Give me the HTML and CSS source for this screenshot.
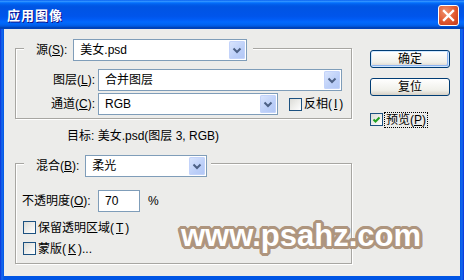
FILE: index.html
```html
<!DOCTYPE html>
<html lang="zh-CN">
<head>
    <meta charset="UTF-8">
    <title>应用图像</title>
    <link rel="stylesheet" href="styles.css">
</head>
<body>
    <div class="window">
        <div class="titlebar">
            <span class="title">应用图像</span>
            <span class="close">
                <svg width="21" height="21" viewBox="0 0 21 21"><path d="M6 6 L15 15 M15 6 L6 15" stroke="#fff" stroke-width="2.4" stroke-linecap="square"/></svg>
            </span>
        </div>
        <div class="client">
            <div class="main">
                <div class="group">
                    <div class="group-head">
                        <span>源(<u>S</u>):</span>
                        <div class="combo combo-source">
                            <span class="value">美女.psd</span>
                            <i class="arrow"><svg width="16" height="18" viewBox="0 0 16 18"><polyline points="4.5,7.5 8,11 11.5,7.5" fill="none" stroke="#4d6185" stroke-width="2"/></svg></i>
                        </div>
                    </div>
                    <div class="rows">
                        <span class="row-label">图层(<u>L</u>):</span>
                        <div class="combo combo-layer">
                            <span class="value">合并图层</span>
                            <i class="arrow"><svg width="16" height="18" viewBox="0 0 16 18"><polyline points="4.5,7.5 8,11 11.5,7.5" fill="none" stroke="#4d6185" stroke-width="2"/></svg></i>
                        </div>
                        <span class="row-label">通道(<u>C</u>):</span>
                        <div class="channel-line">
                            <div class="combo combo-channel">
                                <span class="value">RGB</span>
                                <i class="arrow"><svg width="16" height="18" viewBox="0 0 16 18"><polyline points="4.5,7.5 8,11 11.5,7.5" fill="none" stroke="#4d6185" stroke-width="2"/></svg></i>
                            </div>
                            <label class="check invert"><span class="box"></span>反相(<u>I</u>)</label>
                        </div>
                    </div>
                </div>

                <p class="target">目标: 美女.psd(图层 3, RGB)</p>

                <div class="group group-blend">
                    <div class="group-head">
                        <span>混合(<u>B</u>):</span>
                        <div class="combo combo-blend">
                            <span class="value">柔光</span>
                            <i class="arrow"><svg width="16" height="18" viewBox="0 0 16 18"><polyline points="4.5,7.5 8,11 11.5,7.5" fill="none" stroke="#4d6185" stroke-width="2"/></svg></i>
                        </div>
                    </div>
                    <div class="opacity">
                        <span class="opacity-label">不透明度(<u>O</u>):</span>
                        <div class="textbox">70</div>
                        <span class="unit">%</span>
                    </div>
                    <div class="checks">
                        <label class="check"><span class="box"></span>保留透明区域(<u>T</u>)</label>
                        <label class="check"><span class="box"></span>蒙版(<u>K</u>)...</label>
                    </div>
                </div>
            </div>

            <div class="side">
                <button class="btn btn-default">确定</button>
                <button class="btn">复位</button>
                <label class="check preview">
                    <span class="box"><svg width="11" height="11" viewBox="0 0 11 11"><path d="M2.5 5.5 L4.5 7.5 L8.5 3.5" fill="none" stroke="#21a121" stroke-width="2"/></svg></span>
                    <span class="focus">预览(<u>P</u>)</span>
                </label>
            </div>

            <div class="watermark">www.psahz.com</div>
        </div>
    </div>
</body>
</html>
```

FILE: styles.css
```css
body{
    margin: 0;
    font-family: "Liberation Sans", "Noto Sans CJK SC", sans-serif;
    font-size: 12px;
    line-height: 14px;
    color: #000;
}
.window{
    width: 464px;
    height: 280px;
    display: flex;
    flex-direction: column;
    background: linear-gradient(to right, #0831d9, #166aee 2px, #0055e5 4px, #0055e5 460px, #166aee 462px, #0831d9);
}
/* __________ title bar __________ */
.titlebar{
    height: 29px;
    display: flex;
    align-items: center;
    justify-content: space-between;
    padding: 0 5px 0 7px;
    background: linear-gradient(to bottom, #0058ee 0%, #3593ff 4%, #288eff 6%, #127dff 8%, #036ffc 10%, #0262ee 14%, #0057e5 20%, #0054e3 24%, #0055eb 56%, #005bf5 66%, #026afe 76%, #0062ef 86%, #0052d6 92%, #0040ab 96%, #0045c8 100%);
}
.title{
    color: #fff;
    font-weight: bold;
    font-size: 13px;
    letter-spacing: 1px;
    text-shadow: 1px 1px #0f1089;
    padding-top: 2px;
}
.close{
    width: 21px;
    height: 21px;
    margin-top: 2px;
    box-sizing: border-box;
    border: 1px solid #fff;
    border-radius: 3px;
    background: radial-gradient(circle at 35% 30%, #f0926e, #e0582f 55%, #c4381b);
    display: flex;
    align-items: center;
    justify-content: center;
}
.close svg{
    margin: -1px;
}
/* __________ client area __________ */
.client{
    flex: 1;
    margin: 0 4px 4px;
    padding-left: 11px;
    display: flex;
    gap: 18px;
    position: relative;
    background-color: #ececea;
}
.main{
    width: 337px;
    padding-top: 19px;
}
.group{
    border: 1px solid #a7a6a2;
    box-shadow: inset 1px 1px #fff, 1px 1px #fff;
    padding-bottom: 3px;
}
.group-head{
    display: flex;
    align-items: center;
    gap: 6px;
    width: fit-content;
    height: 22px;
    margin: -10px 0 0 8px;
    padding: 0 6px 0 12px;
    background-color: #ececea;
}
.group-blend{
    margin-top: 20px;
    padding-bottom: 8px;
}
.group-blend .group-head{
    margin-top: -9px;
    padding-right: 4px;
}
.combo{
    height: 22px;
    box-sizing: border-box;
    border: 1px solid #7f9db9;
    background-color: #fff;
    display: flex;
    align-items: center;
}
.combo .value{
    padding-left: 6px;
    flex: 1;
}
.combo .arrow{
    width: 16px;
    height: 18px;
    margin-right: 1px;
    border-radius: 2px;
    background: linear-gradient(135deg, #dbe6fd, #bccff8 60%, #b1c6f5);
    box-shadow: inset 0 0 0 1px #c3d3fa;
}
.combo .arrow svg{
    display: block;
}
.combo-source{ width: 174px; }
.combo-layer{ width: 244px; }
.combo-channel{ width: 180px; }
.combo-blend{ width: 122px; }

.rows{
    display: grid;
    grid-template-columns: 79px auto;
    column-gap: 3px;
    row-gap: 2px;
    align-items: center;
    margin-top: 8px;
}
.row-label{
    text-align: right;
}
.channel-line{
    display: flex;
    align-items: center;
}
.invert{
    margin-left: 11px;
}
.target{
    margin: 10px 0 0;
    padding-left: 52px;
}
.opacity{
    display: flex;
    align-items: center;
    margin-top: 13px;
    padding-left: 6px;
}
.opacity-label{
    width: 73px;
    margin-right: 3px;
    white-space: nowrap;
}
.textbox{
    width: 42px;
    height: 22px;
    box-sizing: border-box;
    border: 1px solid #7f9db9;
    background-color: #fff;
    padding: 3px 0 0 6px;
}
.unit{
    margin-left: 8px;
}
.checks{
    display: flex;
    flex-direction: column;
    gap: 8px;
    margin-top: 9px;
    padding-left: 7px;
}
.check{
    display: flex;
    align-items: center;
    height: 13px;
    gap: 2px;
}
.box{
    width: 13px;
    height: 13px;
    box-sizing: border-box;
    border: 1px solid #1c5180;
    background: linear-gradient(135deg, #dcdcd7, #fff);
    display: flex;
    align-items: center;
    justify-content: center;
}
.box svg{
    display: block;
}
/* __________ buttons __________ */
.side{
    width: 80px;
    padding-top: 21px;
    display: flex;
    flex-direction: column;
}
.btn{
    width: 80px;
    height: 18px;
    margin-bottom: 10px;
    padding: 0;
    border: 1px solid #003c74;
    border-radius: 3px;
    background: linear-gradient(to bottom, #fff, #f0f0ea 70%, #d6d0c5);
    font: inherit;
    line-height: 14px;
    color: #000;
}
.btn-default{
    box-shadow: inset 0 0 0 1px #cee7ff, inset -1px -1px 0 1px #8cb4f2;
}
.preview{
    margin-top: 7px;
}
.focus{
    outline: 1px dotted #000;
    padding: 0 1px;
}
/* __________ watermark __________ */
.watermark{
    position: absolute;
    left: 177px;
    top: 191px;
    font-family: "Liberation Sans", Arial, sans-serif;
    font-weight: bold;
    font-size: 31px;
    line-height: 31px;
    color: #fff;
    text-shadow:
        3px 0 #ae957e, -3px 0 #ae957e, 0 3px #ae957e, 0 -3px #ae957e,
        2px 2px #ae957e, -2px 2px #ae957e, 2px -2px #ae957e, -2px -2px #ae957e,
        3px 1px #ae957e, -3px 1px #ae957e, 3px -1px #ae957e, -3px -1px #ae957e,
        1px 3px #ae957e, -1px 3px #ae957e, 1px -3px #ae957e, -1px -3px #ae957e;
}
```
